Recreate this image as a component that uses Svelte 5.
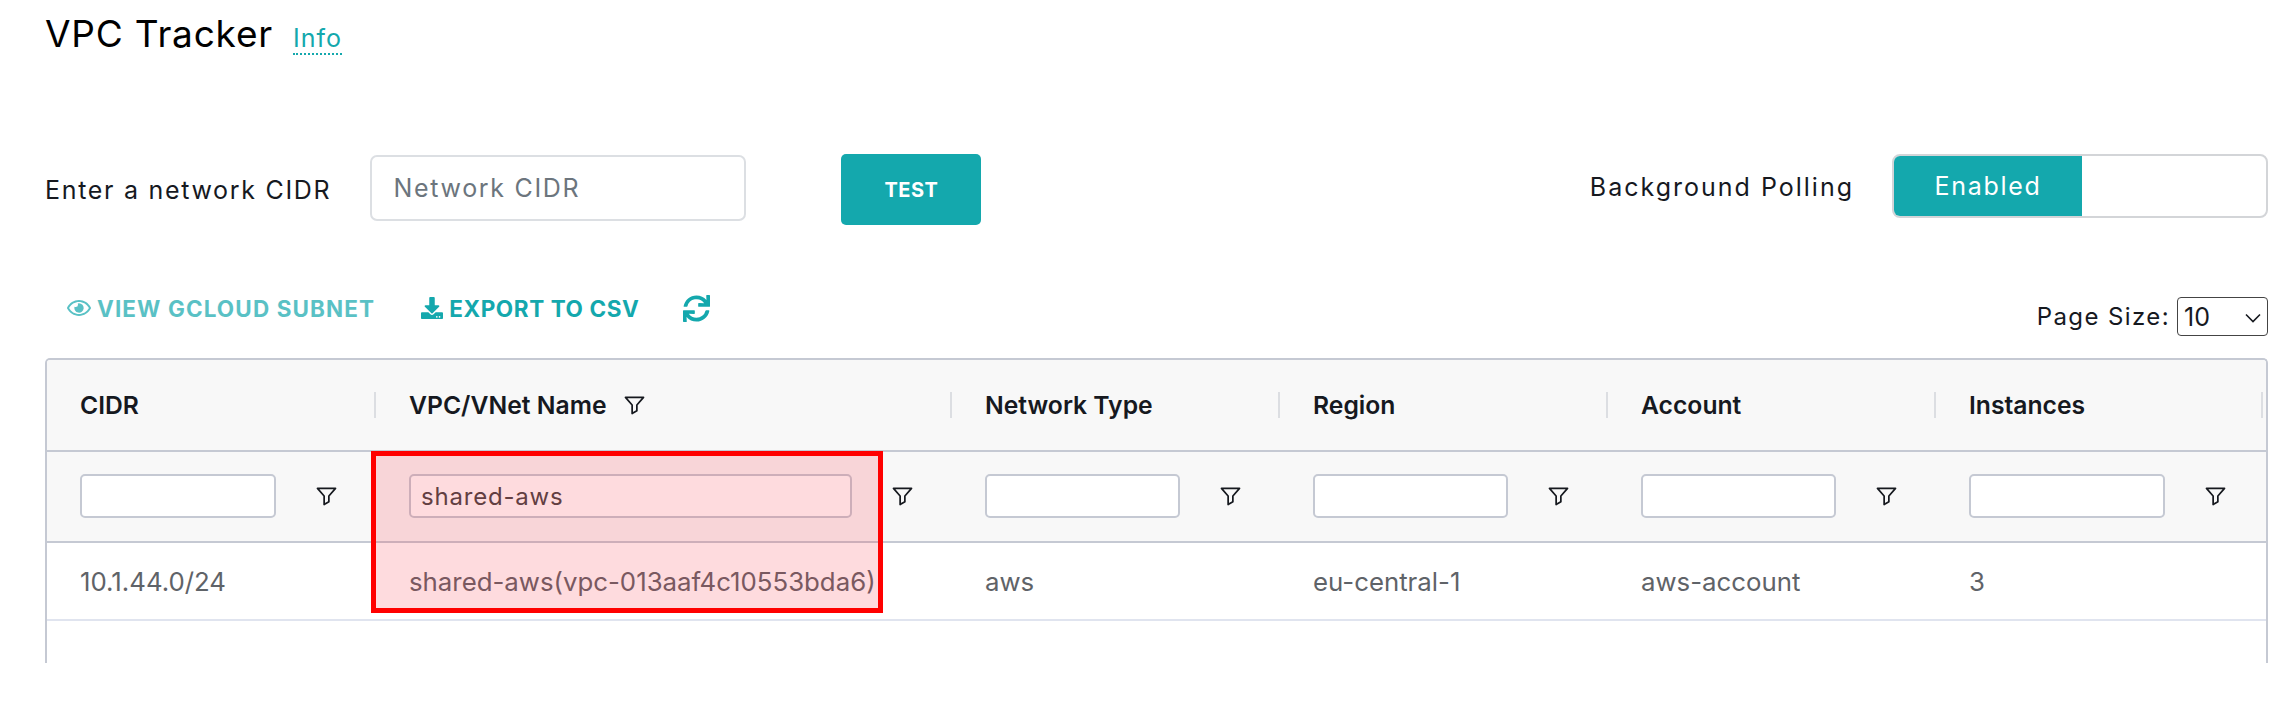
<script>
  const columns = [
    { name: 'CIDR', value: '10.1.44.0/24', filter: '' },
    { name: 'VPC/VNet Name', value: 'shared-aws(vpc-013aaf4c10553bda6)', filter: 'shared-aws', active: true },
    { name: 'Network Type', value: 'aws', filter: '' },
    { name: 'Region', value: 'eu-central-1', filter: '' },
    { name: 'Account', value: 'aws-account', filter: '' },
    { name: 'Instances', value: '3', filter: '' },
  ]
</script>

{#snippet funnel()}
  <svg class="funnel" viewBox="0 0 22 20" aria-hidden="true">
    <path d="M1.5 1.5H20.5L13.5 9.5V15.5L8.5 18.5V9.5Z" />
  </svg>
{/snippet}

<main>
  <header class="title">
    <h1>VPC Tracker</h1>
    <a href="#info">Info</a>
  </header>

  <section class="controls">
    <label for="cidr">Enter a network CIDR</label>
    <input id="cidr" class="cidr" placeholder="Network CIDR" />
    <button class="test">TEST</button>
    <span class="polling">Background Polling</span>
    <div class="toggle">
      <span class="on">Enabled</span>
      <span class="off"></span>
    </div>
  </section>

  <section class="toolbar">
    <button class="action disabled">
      <svg class="eye" viewBox="0 0 576 512" aria-hidden="true">
        <path d="M288 144a110.94 110.94 0 0 0-31.24 5 55.4 55.4 0 0 1 7.24 27 56 56 0 0 1-56 56 55.4 55.4 0 0 1-27-7.24A111.71 111.71 0 1 0 288 144zm284.52 97.4C518.29 135.59 410.93 64 288 64S57.68 135.64 3.48 241.41a32.35 32.35 0 0 0 0 29.19C57.71 376.41 165.07 448 288 448s230.32-71.64 284.52-177.41a32.35 32.35 0 0 0 0-29.19zM288 400c-98.65 0-189.09-55-237.93-144C98.91 167 189.34 112 288 112s189.09 55 237.93 144C477.1 345 386.66 400 288 400z" />
      </svg>
      VIEW GCLOUD SUBNET
    </button>
    <button class="action">
      <svg class="download" viewBox="0 0 512 512" aria-hidden="true">
        <path d="M216 0h80c13.3 0 24 10.7 24 24v168h87.7c17.8 0 26.7 21.5 14.1 34.1L269.7 378.3c-7.5 7.5-19.8 7.5-27.3 0L90.1 226.1c-12.6-12.6-3.7-34.1 14.1-34.1H192V24c0-13.3 10.7-24 24-24zm296 376v112c0 13.3-10.7 24-24 24H24c-13.3 0-24-10.7-24-24V376c0-13.3 10.7-24 24-24h146.7l49 49c20.1 20.1 52.5 20.1 72.6 0l49-49H488c13.3 0 24 10.7 24 24zm-124 88c0-11-9-20-20-20s-20 9-20 20 9 20 20 20 20-9 20-20zm64 0c0-11-9-20-20-20s-20 9-20 20 9 20 20 20 20-9 20-20z" />
      </svg>
      EXPORT TO CSV
    </button>
    <button class="refresh" aria-label="Refresh">
      <svg viewBox="0 0 512 512" aria-hidden="true">
        <path d="M440.65 12.57l4 82.77A247.16 247.16 0 0 0 255.83 8C134.73 8 33.91 94.92 12.29 209.82A12 12 0 0 0 24.09 224h49.05a12 12 0 0 0 11.67-9.26 175.91 175.91 0 0 1 317-56.94l-101.46-4.86a12 12 0 0 0-12.57 12v47.41a12 12 0 0 0 12 12H500a12 12 0 0 0 12-12V12a12 12 0 0 0-12-12h-47.37a12 12 0 0 0-11.98 12.57zM255.83 432a175.61 175.61 0 0 1-146-77.8l101.8 4.87a12 12 0 0 0 12.57-12v-47.4a12 12 0 0 0-12-12H12a12 12 0 0 0-12 12V500a12 12 0 0 0 12 12h47.35a12 12 0 0 0 12-12.6l-4.15-82.57A247.17 247.17 0 0 0 255.83 504c121.11 0 221.93-86.92 243.55-201.82a12 12 0 0 0-11.8-14.18h-49.05a12 12 0 0 0-11.67 9.26A175.86 175.86 0 0 1 255.83 432z" />
      </svg>
    </button>
    <div class="page-size">
      <label for="size">Page Size:</label>
      <div class="select">
        <select id="size">
          <option>10</option>
          <option>25</option>
          <option>50</option>
        </select>
        <svg viewBox="0 0 16 10" aria-hidden="true"><path d="M1 1.5L8 8.5L15 1.5" /></svg>
      </div>
    </div>
  </section>

  <section class="table">
    <div class="row head">
      {#each columns as col}
        <div class="cell">
          <span>{col.name}</span>
          {#if col.active}{@render funnel()}{/if}
        </div>
      {/each}
    </div>
    <div class="row filters">
      {#each columns as col}
        <div class="cell">
          <input value={col.filter} aria-label={col.name} />
          {@render funnel()}
        </div>
      {/each}
    </div>
    <div class="row body">
      {#each columns as col}
        <div class="cell">{col.value}</div>
      {/each}
    </div>
    <div class="highlight"></div>
  </section>
</main>

<style>
  :global(body) {
    background: #fff;
  }
  main {
    padding: 12px 24px 0 45px;
    color: #16191f;
    font-family: Inter, 'Liberation Sans', sans-serif;
    font-size: 25px;
    letter-spacing: 1.7px;
  }
  button,
  input,
  select {
    font-family: inherit;
    letter-spacing: inherit;
  }
  .title {
    display: flex;
    align-items: baseline;
    gap: 20px;
    height: 44px;
  }
  h1 {
    margin: 0;
    font-size: 37px;
    font-weight: 400;
    letter-spacing: 0.8px;
    line-height: 44px;
    color: #000;
  }
  .title a {
    color: #14a8ad;
    font-size: 25px;
    letter-spacing: 1px;
    text-decoration: none;
    border-bottom: 2px dotted #14a8ad;
    line-height: 30px;
  }
  .controls {
    display: flex;
    align-items: center;
    margin-top: 98px;
    height: 71px;
  }
  .cidr {
    box-sizing: border-box;
    width: 376px;
    height: 66px;
    margin: 0 0 3px 39px;
    padding: 0 21px;
    font-size: 25px;
    border: 2px solid #dcdfe3;
    border-radius: 7px;
    outline: none;
  }
  .cidr::placeholder {
    color: #6c757d;
    opacity: 1;
  }
  .test {
    width: 140px;
    height: 71px;
    margin-left: 95px;
    border: 0;
    border-radius: 5px;
    background: #14a8ad;
    color: #fff;
    font-size: 20px;
    font-weight: 700;
    letter-spacing: 0.5px;
  }
  .polling {
    margin: 0 38px 6px auto;
    letter-spacing: 2px;
  }
  .toggle {
    box-sizing: border-box;
    display: flex;
    width: 376px;
    height: 64px;
    margin-bottom: 8px;
    border: 2px solid #d3d5d8;
    border-radius: 8px;
    overflow: hidden;
  }
  .on {
    display: flex;
    align-items: center;
    justify-content: center;
    width: 188px;
    background: #14a8ad;
    color: #fff;
  }
  .toolbar {
    display: flex;
    align-items: center;
    margin-top: 62px;
    height: 42px;
  }
  .action {
    display: flex;
    align-items: center;
    gap: 6px;
    padding: 0;
    border: 0;
    background: none;
    color: #14a8ad;
    font-size: 22.5px;
    font-weight: 700;
    letter-spacing: 0.6px;
    white-space: nowrap;
  }
  .action svg,
  .refresh svg {
    fill: currentColor;
    display: block;
  }
  .action.disabled {
    margin-left: 22px;
    letter-spacing: 1.1px;
    opacity: 0.7;
  }
  .action + .action {
    margin-left: 46px;
  }
  .eye {
    width: 24px;
    height: 22px;
  }
  .download {
    width: 22px;
    height: 22px;
  }
  .refresh {
    margin-left: 44px;
    padding: 0;
    border: 0;
    background: none;
    color: #14a8ad;
  }
  .refresh svg {
    width: 27px;
    height: 27px;
  }
  .page-size {
    display: flex;
    align-items: center;
    gap: 7px;
    margin-left: auto;
    margin-top: 17px;
    font-size: 24px;
    letter-spacing: 1.4px;
  }
  .select {
    position: relative;
    display: flex;
  }
  .select svg {
    position: absolute;
    top: 16px;
    right: 7px;
    width: 16px;
    height: 10px;
    fill: none;
    stroke: #16191f;
    stroke-width: 1.6;
    pointer-events: none;
  }
  select {
    appearance: none;
    box-sizing: border-box;
    width: 91px;
    height: 39px;
    padding-left: 6px;
    font-size: 25px;
    letter-spacing: 0;
    border: 1.5px solid #444;
    border-radius: 4px;
    background: #fff;
    color: #16191f;
  }
  .table {
    position: relative;
    box-sizing: border-box;
    height: 305px;
    margin-top: 29px;
    border: 2px solid #c5c9d3;
    border-bottom: 0;
    border-radius: 5px 5px 0 0;
    font-size: 25.8px;
    letter-spacing: 0;
    overflow: hidden;
  }
  .row {
    display: grid;
    grid-template-columns: 327px 576px 328px 328px 328px 1fr;
  }
  .cell {
    display: flex;
    align-items: center;
    box-sizing: border-box;
    padding-left: 35px;
    min-width: 0;
    white-space: nowrap;
  }
  .cell:first-child {
    padding-left: 33px;
  }
  .head {
    height: 90px;
    background: #f8f8f8;
    border-bottom: 2px solid #c5c9d3;
    font-size: 24.7px;
    font-weight: 600;
    color: #16191f;
  }
  .head .cell {
    position: relative;
    gap: 17px;
  }
  .head .cell::after {
    content: '';
    position: absolute;
    top: 32px;
    right: -2px;
    width: 2px;
    height: 26px;
    background: #dcdee2;
  }
  .head .cell:last-child::after {
    right: 3px;
  }
  .filters {
    height: 89px;
    background: #f8f8f8;
    border-bottom: 2px solid #c5c9d3;
  }
  .filters input {
    box-sizing: border-box;
    flex: 1;
    min-width: 0;
    height: 44px;
    margin-top: -1px;
    padding: 0 10px;
    font-size: 24px;
    letter-spacing: 0.8px;
    color: #444;
    background: #fff;
    border: 2px solid #c5c9d3;
    border-radius: 5px;
    outline: none;
  }
  .filters .cell {
    gap: 40px;
    padding-right: 37px;
  }
  .filters .cell:last-child {
    padding-right: 40px;
  }
  .funnel {
    flex: none;
    width: 21px;
    height: 19px;
    fill: none;
    stroke: #16191f;
    stroke-width: 1.8;
    stroke-linejoin: round;
  }
  .body {
    height: 76px;
    border-bottom: 2px solid #e0e4ef;
    color: #5f6368;
  }
  .highlight {
    position: absolute;
    left: 324px;
    top: 91px;
    width: 512px;
    height: 162px;
    box-sizing: border-box;
    border: 5px solid #f00;
    background: rgba(250, 40, 60, 0.17);
  }
</style>
